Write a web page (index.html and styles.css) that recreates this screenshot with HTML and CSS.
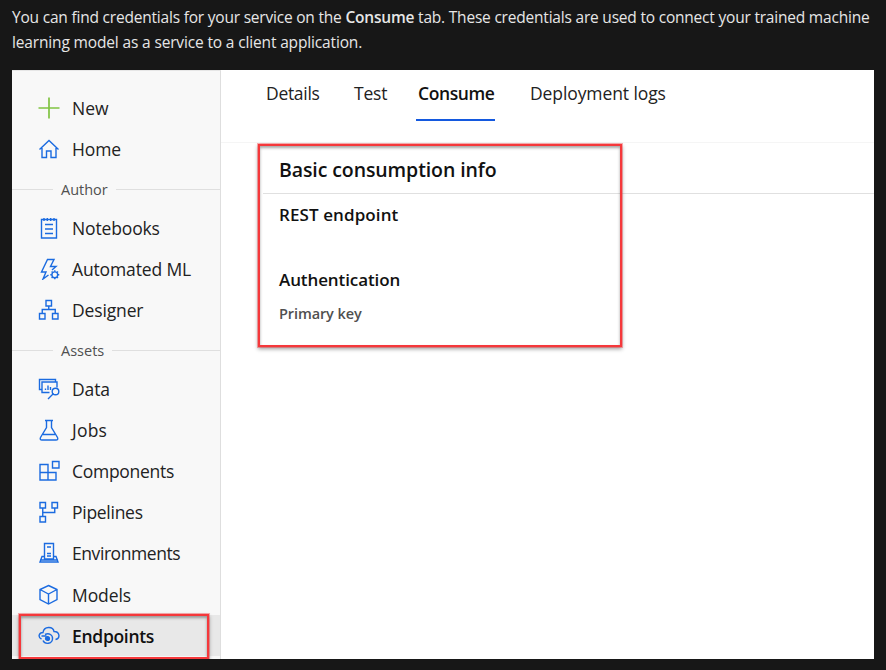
FILE: index.html
```html
<!DOCTYPE html>
<html lang="en">
<head>
<meta charset="utf-8">
<title>Consume tab</title>
<link rel="stylesheet" href="styles.css">
</head>
<body>
<p class="intro"><span class="line-a">You can find credentials for your service on the <strong>Consume</strong> tab. These credentials are used to connect your trained machine</span><br><span class="line-b">learning model as a service to a client application.</span></p>
<div class="shot">
  <nav class="side">
    <a class="item new"><svg viewBox="0 0 22 22"><path d="M11 .5v21M.5 11h21"/></svg><span>New</span></a>
    <a class="item home"><svg viewBox="0 0 22 22"><path d="M1.500 11.500 11 2.500l9.500 9M4 10V19.500h4.500v-6.500h4.500v6.500H18V10"/></svg><span>Home</span></a>
    <div class="group author"><span>Author</span></div>
    <a class="item notebooks"><svg viewBox="0 0 22 22"><path d="M3.500 2.500h15v18.500h-15zM6 1v3M9.300 1v3M12.700 1v3M16 1v3M7 7.500h8M7 12h8M7 16.500h8"/></svg><span>Notebooks</span></a>
    <a class="item automated"><svg viewBox="0 0 22 22"><path d="M10.500 17 5 21l3-7H3.500L9.500 1.500H16L12.500 8.500h5.500L14 12"/><circle cx="16.800" cy="16.800" r="2.900"/><path d="M16.800 12.300v1.500M16.800 19.800v1.500M12.300 16.800h1.500M19.800 16.800h1.500M13.600 13.600l1 1M19 19l1 1M13.600 20l1-1M19 14.600l1-1"/></svg><span>Automated ML</span></a>
    <a class="item designer"><svg viewBox="0 0 22 22"><path d="M8 1.500h5.500V7H8zM1.500 14.500H7V20H1.500zM14.500 14.500H20V20h-5.500zM10.750 7v3.500M4.250 14.500v-4h13v4"/></svg><span>Designer</span></a>
    <div class="group assets"><span>Assets</span></div>
    <a class="item data"><svg viewBox="0 0 22 22"><path d="M4 11.500H1.500V1.500h16V4M11.500 14.500H4V4h15v5.500M7.500 12v-1.500M10 12V7.500M12.500 12V9M10 21l5.500-5.500"/><circle cx="17.500" cy="13.500" r="3.300"/></svg><span>Data</span></a>
    <a class="item jobs"><svg viewBox="0 0 22 22"><path d="M7 1.500h8M8.500 1.500v7L2.500 18.500Q1.500 21 4 21h14Q20.500 21 19.500 18.500L13.500 8.500v-7M5 15.500h12"/></svg><span>Jobs</span></a>
    <a class="item components"><svg viewBox="0 0 22 22"><path d="M2 4.500h8v15.500H2zM2 12.500h16V20H2zM14.500 1.500H21V8h-6.500z"/></svg><span>Components</span></a>
    <a class="item pipelines"><svg viewBox="0 0 22 22"><path d="M2 1.500h5.500V7H2zM14 1.500h5.500V7H14zM2 15.500h5.500V21H2zM4.750 7v8.500M4.750 11.500h12V7"/></svg><span>Pipelines</span></a>
    <a class="item environments"><svg viewBox="0 0 22 22"><path d="M6.500 17V1.500h9V17zM6.500 14.500H4L2 20h18l-2-5.500h-2.500M9 5h4M9 11.500h4M9 14h4M2 18h18"/></svg><span>Environments</span></a>
    <a class="item models"><svg viewBox="0 0 22 22"><path d="M10.500 1.500 19 5.500v10l-8.500 4.500L2 15.500v-10zM2 5.500l8.500 4.500L19 5.500M10.500 10v10"/></svg><span>Models</span></a>
    <a class="item endpoints"><svg viewBox="0 0 22 22"><path d="M3.500 14C-.5 12 1 7.500 5 7.500c1-6.500 10-6.500 11-1 6 0 6.500 7 1.500 8"/><path d="M3.500 11h5M7 9.500c4-2 8 .5 7.500 4.500-.5 5-7.500 6-9.500 1.500"/><circle class="dot" cx="9.500" cy="13.500" r="1.900"/></svg><span>Endpoints</span><i class="mark"></i></a>
  </nav>
  <main class="main">
    <div class="tabs"><span class="t1">Details</span><span class="t2">Test</span><span class="t3 active">Consume</span><span class="t4">Deployment logs</span></div>
    <section class="panel">
      <h2><span>Basic consumption info</span></h2>
      <h3 class="rest"><span>REST endpoint</span></h3>
      <h3 class="auth"><span>Authentication</span></h3>
      <p><span>Primary key</span></p>
      <i class="mark"></i>
    </section>
  </main>
</div>
</body>
</html>
```
FILE: styles.css
```css
* { box-sizing: border-box; }
body {
  margin: 0;
  height: 670px;
  overflow: hidden;
  background: #171717;
  font-family: "Open Sans", "Noto Sans", sans-serif;
  color: #222;
}
.intro {
  margin: 0;
  height: 70px;
  padding: 5px 0 0 12px;
  color: #e6e6e6;
  font-size: 15.5px;
  line-height: 25px;
  white-space: nowrap;
}
.intro strong { font-weight: 600; }
.line-a { letter-spacing: -.205px; }
.line-b { letter-spacing: -.15px; }
.shot {
  display: flex;
  width: 862px;
  height: 589px;
  margin-left: 12px;
  overflow: hidden;
  background: #fff;
}
.side {
  width: 209px;
  padding-top: 16.300px;
  background: #f8f8f8;
  border-top: 1px solid #e6e6e6;
  border-right: 1px solid #dedede;
}
.item {
  position: relative;
  display: flex;
  align-items: center;
  gap: 12px;
  height: 41.200px;
  padding-left: 26px;
  font-size: 17.500px;
  white-space: nowrap;
}
.item svg {
  width: 22px;
  height: 22px;
  fill: none;
  stroke: #1b6be0;
  stroke-width: 1.400;
}
.item .dot { fill: #1b6be0; }
.item.new svg { stroke: #80c342; stroke-width: 1.700; }
.home, .notebooks, .automated, .designer { letter-spacing: -.14px; }
.data, .models { letter-spacing: -.1px; }
.components, .pipelines { letter-spacing: -.28px; }
.environments { letter-spacing: -.43px; }
.jobs { letter-spacing: .2px; }
.group {
  display: flex;
  align-items: center;
  gap: 8px;
  height: 37.400px;
  padding-top: 2px;
  color: #505050;
  font-size: 14.500px;
}
.group::before, .group::after {
  content: "";
  height: 1px;
  background: #dfdfdf;
}
.group::before { width: 41px; }
.group::after { flex: 1; }
.endpoints { background: #e8e8e8; font-weight: 600; color: #111; letter-spacing: -.3px; }
.mark {
  position: absolute;
  border: 2.500px solid #f5383b;
  outline: .5px solid rgba(245,56,59,.4);
  box-shadow: 0 2px 4px rgba(0,0,0,.4), inset 0 2px 3px rgba(0,0,0,.35);
}
.endpoints .mark { left: 7px; top: -1px; width: 190px; height: 45px; }
.main { flex: 1; }
.tabs {
  display: flex;
  height: 73px;
  padding-left: 45px;
  border-bottom: 1px solid #f5f5f5;
  font-size: 17.500px;
  line-height: 47px;
  white-space: nowrap;
}
.t1 { width: 88px; letter-spacing: -.3px; }
.t2 { width: 62px; letter-spacing: -.2px; }
.t3 { width: 79px; height: 51px; padding-left: 2px; letter-spacing: -.4px; }
.t4 { margin-left: 35px; letter-spacing: -.1px; }
.active { border-bottom: 2px solid #1459df; font-weight: 600; color: #111; }
.panel {
  position: relative;
  height: 206px;
  margin-left: 37px;
  white-space: nowrap;
  color: #111;
}
.panel h2 {
  height: 51px;
  margin: 0 0 0 5px;
  padding-left: 16px;
  border-bottom: 1px solid #e0e0e0;
  font-size: 19.500px;
  font-weight: 600;
  letter-spacing: -.1px;
  line-height: 54px;
}
.panel h3 {
  height: 65px;
  margin: 0;
  padding-left: 21px;
  font-size: 17px;
  font-weight: 600;
  line-height: 42px;
}
.panel .rest { letter-spacing: .1px; }
.panel .auth { height: 42px; letter-spacing: -.1px; }
.panel p {
  margin: 0;
  padding-left: 21px;
  color: #505050;
  font-size: 14.500px;
  font-weight: 600;
  letter-spacing: -.1px;
  line-height: 25px;
}
.panel .mark { left: 0; top: 1px; width: 364px; height: 203px; }
```
